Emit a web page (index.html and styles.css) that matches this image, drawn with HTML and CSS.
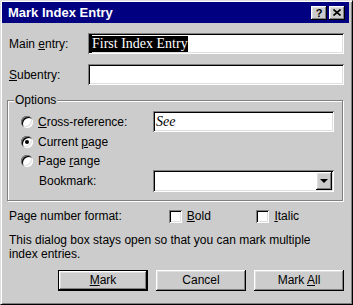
FILE: index.html
```html
<!DOCTYPE html>
<html lang="en">
<head>
    <meta charset="UTF-8">
    <meta name="viewport" content="width=device-width, initial-scale=1.0">
    <title>Mark Index Entry</title>
    <link rel="stylesheet" href="styles.css">
</head>
<body>

    <div class="window">
        <div class="titlebar">
            <span class="title">Mark Index Entry</span>
            <div class="title-buttons">
                <span class="tbtn tbtn-help">?</span>
                <span class="tbtn">
                    <svg width="8" height="7" viewBox="0 0 8 7">
                        <path d="M0.5 0.5 L7.5 6.5 M7.5 0.5 L0.5 6.5" stroke="#000" stroke-width="1.6" fill="none"/>
                    </svg>
                </span>
            </div>
        </div>

        <div class="content">
            <div class="row">
                <span class="label">Main <u>e</u>ntry:</span>
                <div class="field field-wide">
                    <span class="caret"></span><span class="selected">First Index Entry</span>
                </div>
            </div>
            <div class="row row-gap">
                <span class="label"><u>S</u>ubentry:</span>
                <div class="field field-wide"></div>
            </div>

            <div class="group">
                <span class="legend">Options</span>
                <div class="opt opt-a">
                    <span class="radio"></span>
                    <span><u>C</u>ross-reference:</span>
                    <div class="field field-opt"><span class="see">See</span></div>
                </div>
                <div class="opt opt-b">
                    <span class="radio checked"></span>
                    <span>Current <u>p</u>age</span>
                </div>
                <div class="opt opt-c">
                    <span class="radio"></span>
                    <span>Page <u>r</u>ange</span>
                </div>
                <div class="opt opt-d">
                    <span class="bookmark">Bookmark:</span>
                    <div class="field field-opt combo">
                        <span class="drop"><span class="arrow"></span></span>
                    </div>
                </div>
            </div>

            <div class="format">
                <span class="format-label">Page number format:</span>
                <span class="check-item"><span class="checkbox"></span><span><u>B</u>old</span></span>
                <span class="check-item"><span class="checkbox"></span><span><u>I</u>talic</span></span>
            </div>

            <p class="note">This dialog box stays open so that you can mark multiple<br>index entries.</p>

            <div class="buttons">
                <span class="btn btn-default"><u>M</u>ark</span>
                <span class="btn">Cancel</span>
                <span class="btn">Mark <u>A</u>ll</span>
            </div>
        </div>
    </div>

</body>
</html>
```

FILE: styles.css
```css
body {
    margin: 0;
    font-family: "Liberation Sans", Arial, sans-serif;
    font-size: 12px;
    color: #000;
    background: #cccccc;
}
.window {
    width: 353px;
    height: 305px;
    box-sizing: border-box;
    background: #cccccc;
    border: 1px solid;
    border-color: #dfdfdf #000 #000 #dfdfdf;
    box-shadow: inset 1px 1px 0 #fff, inset -1px -1px 0 #808080;
    padding: 1px 3px 3px 1px;
}
.titlebar {
    height: 21px;
    background: #000080;
    display: flex;
    align-items: center;
    padding-left: 6px;
}
.title {
    color: #fff;
    font-weight: bold;
    font-size: 13px;
}
.title-buttons {
    margin-left: auto;
    margin-right: 4px;
    display: flex;
    gap: 2px;
}
.tbtn {
    width: 16px;
    height: 14px;
    background: #cccccc;
    box-shadow: inset -1px -1px 0 #000, inset 1px 1px 0 #fff, inset -2px -2px 0 #808080, inset 2px 2px 0 #dfdfdf;
    display: flex;
    align-items: center;
    justify-content: center;
}
.tbtn-help {
    font-weight: bold;
    font-size: 11px;
    line-height: 14px;
}
.content {
    padding: 10px 5px 0 5px;
}
.row {
    display: flex;
    align-items: center;
    height: 21px;
}
.row-gap {
    margin-top: 10px;
}
.label {
    width: 79px;
    padding-left: 2px;
}
.field {
    height: 21px;
    box-sizing: border-box;
    background: #fff;
    box-shadow: inset 1px 1px 0 #808080, inset -1px -1px 0 #fff, inset 2px 2px 0 #000, inset -2px -2px 0 #dfdfdf;
    display: flex;
    align-items: center;
    padding: 0 2px;
}
.field-wide {
    flex: 1;
}
.caret {
    width: 2px;
    height: 18px;
    background: #000;
}
.selected {
    font-family: "Liberation Serif", "Times New Roman", serif;
    font-size: 14px;
    line-height: 16px;
    background: #000;
    color: #fff;
}
.group {
    position: relative;
    margin: 15px 1px 0 0;
    height: 101px;
    box-sizing: border-box;
    border: 1px solid #808080;
    box-shadow: inset 1px 1px 0 #fff, 1px 1px 0 #fff;
    padding: 10px 8px 0 13px;
}
.legend {
    position: absolute;
    top: -8px;
    left: 6px;
    padding: 0 1px;
    background: #cccccc;
}
.opt {
    display: flex;
    align-items: center;
}
.opt-a { height: 21px; }
.opt-b { height: 20px; }
.opt-c { height: 18px; }
.opt-d { height: 22px; }
.radio {
    position: relative;
    width: 12px;
    height: 12px;
    border-radius: 50%;
    background: #fff;
    box-shadow: inset 1px 1px 0 #808080, inset -1px -1px 0 #fff, inset 2px 2px 0 #000, inset -2px -2px 0 #dfdfdf;
    margin-right: 5px;
    flex-shrink: 0;
}
.radio.checked::after {
    content: "";
    position: absolute;
    left: 4px;
    top: 4px;
    width: 4px;
    height: 4px;
    border-radius: 50%;
    background: #000;
}
.field-opt {
    width: 181px;
    margin-left: auto;
}
.see {
    font-family: "Liberation Serif", "Times New Roman", serif;
    font-style: italic;
    font-size: 14px;
    padding-left: 1px;
}
.bookmark {
    padding-left: 18px;
}
.combo {
    height: 22px;
    justify-content: flex-end;
    padding: 2px;
}
.drop {
    width: 16px;
    height: 18px;
    background: #cccccc;
    box-shadow: inset -1px -1px 0 #000, inset 1px 1px 0 #fff, inset -2px -2px 0 #808080, inset 2px 2px 0 #dfdfdf;
    display: flex;
    align-items: center;
    justify-content: center;
}
.arrow {
    width: 0;
    height: 0;
    border-left: 4px solid transparent;
    border-right: 4px solid transparent;
    border-top: 4px solid #000;
}
.format {
    display: flex;
    align-items: center;
    height: 18px;
    margin-top: 6px;
}
.format-label {
    width: 177px;
    padding-left: 2px;
}
.check-item {
    display: flex;
    align-items: center;
    gap: 5px;
    width: 97px;
}
.checkbox {
    width: 13px;
    height: 13px;
    background: #fff;
    box-shadow: inset 1px 1px 0 #808080, inset -1px -1px 0 #fff, inset 2px 2px 0 #000, inset -2px -2px 0 #dfdfdf;
}
.note {
    margin: 8px 0 0 0;
    padding-left: 2px;
    line-height: 14px;
}
.buttons {
    display: flex;
    justify-content: flex-end;
    gap: 8px;
    margin-top: 9px;
}
.btn {
    width: 90px;
    height: 21px;
    box-sizing: border-box;
    background: #cccccc;
    box-shadow: inset -1px -1px 0 #000, inset 1px 1px 0 #fff, inset -2px -2px 0 #808080, inset 2px 2px 0 #dfdfdf;
    text-align: center;
    line-height: 21px;
}
.btn-default {
    border: 1px solid #000;
    line-height: 19px;
}
```
